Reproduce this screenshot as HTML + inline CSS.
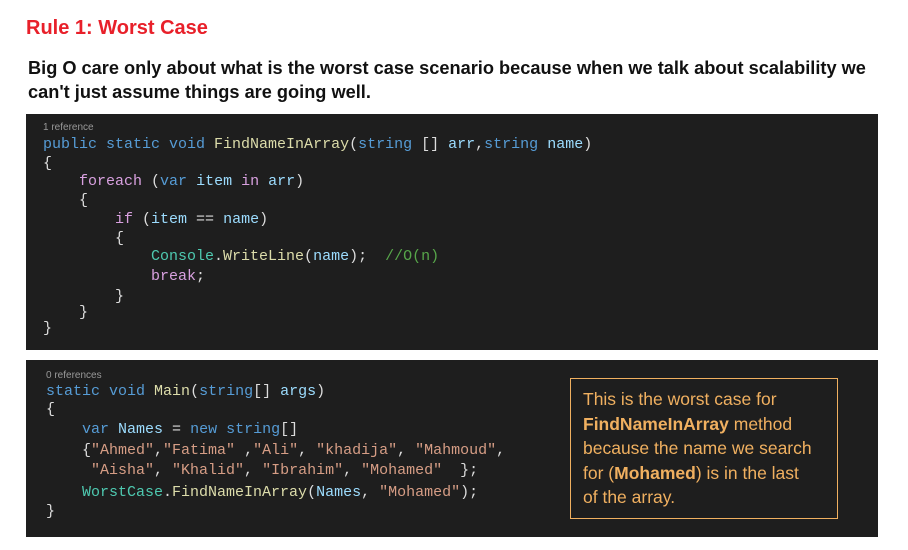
<!DOCTYPE html>
<html><head><meta charset="utf-8"><style>
body{margin:0;width:908px;height:550px;background:#fff;position:relative;overflow:hidden;font-family:"Liberation Sans",sans-serif}
h1{position:absolute;left:26px;top:17px;margin:0;font-size:20px;color:#e8202a;font-weight:bold}
.p{position:absolute;left:28px;font-size:18.2px;font-weight:bold;color:#111;white-space:nowrap}
.box{position:absolute;left:26px;width:852px;background:#1e1e1e}
.c{position:absolute;white-space:pre;font-family:"Liberation Mono",monospace;font-size:15px;color:#dcdcdc;line-height:18px}
.r{position:absolute;font-size:10px;color:#999}
.k{color:#569cd6}.f{color:#d8a0df}.t{color:#4ec9b0}.m{color:#dcdcaa}.v{color:#9cdcfe}.s{color:#d69d85}.g{color:#57a64a}
.note{position:absolute;left:570px;top:378px;width:268px;height:141px;border:1px solid #f0b060;box-sizing:border-box;color:#f0b060;font-size:17.5px;line-height:24.5px;padding:8px 0 0 12px}
</style></head><body>
<h1>Rule 1: Worst Case</h1>
<div class="p" style="top:58px">Big O care only about what is the worst case scenario because when we talk about scalability we</div>
<div class="p" style="top:82px">can't just assume things are going well.</div>

<div class="box" style="top:114px;height:236px"></div>
<div class="r" style="left:43px;top:122px">1 reference</div>
<div class="c" style="left:43px;top:136px"><span class="k">public static void</span> <span class="m">FindNameInArray</span>(<span class="k">string</span> [] <span class="v">arr</span>,<span class="k">string</span> <span class="v">name</span>)</div>
<div class="c" style="left:43px;top:155px">{</div>
<div class="c" style="left:79px;top:173px"><span class="f">foreach</span> (<span class="k">var</span> <span class="v">item</span> <span class="f">in</span> <span class="v">arr</span>)</div>
<div class="c" style="left:79px;top:192px">{</div>
<div class="c" style="left:115px;top:211px"><span class="f">if</span> (<span class="v">item</span> == <span class="v">name</span>)</div>
<div class="c" style="left:115px;top:230px">{</div>
<div class="c" style="left:151px;top:248px"><span class="t">Console</span>.<span class="m">WriteLine</span>(<span class="v">name</span>);  <span class="g">//O(n)</span></div>
<div class="c" style="left:151px;top:268px"><span class="f">break</span>;</div>
<div class="c" style="left:115px;top:288px">}</div>
<div class="c" style="left:79px;top:304px">}</div>
<div class="c" style="left:43px;top:320px">}</div>

<div class="box" style="top:360px;height:177px"></div>
<div class="r" style="left:46px;top:370px">0 references</div>
<div class="c" style="left:46px;top:383px"><span class="k">static void</span> <span class="m">Main</span>(<span class="k">string</span>[] <span class="v">args</span>)</div>
<div class="c" style="left:46px;top:401px">{</div>
<div class="c" style="left:82px;top:421px"><span class="k">var</span> <span class="v">Names</span> = <span class="k">new string</span>[]</div>
<div class="c" style="left:82px;top:442px">{<span class="s">"Ahmed"</span>,<span class="s">"Fatima"</span> ,<span class="s">"Ali"</span>, <span class="s">"khadija"</span>, <span class="s">"Mahmoud"</span>,</div>
<div class="c" style="left:91px;top:462px"><span class="s">"Aisha"</span>, <span class="s">"Khalid"</span>, <span class="s">"Ibrahim"</span>, <span class="s">"Mohamed"</span>  };</div>
<div class="c" style="left:82px;top:484px"><span class="t">WorstCase</span>.<span class="m">FindNameInArray</span>(<span class="v">Names</span>, <span class="s">"Mohamed"</span>);</div>
<div class="c" style="left:46px;top:503px">}</div>

<div class="note">This is the worst case for<br><b>FindNameInArray</b> method<br>because the name we search<br>for (<b>Mohamed</b>) is in the last<br>of the array.</div>
</body></html>
